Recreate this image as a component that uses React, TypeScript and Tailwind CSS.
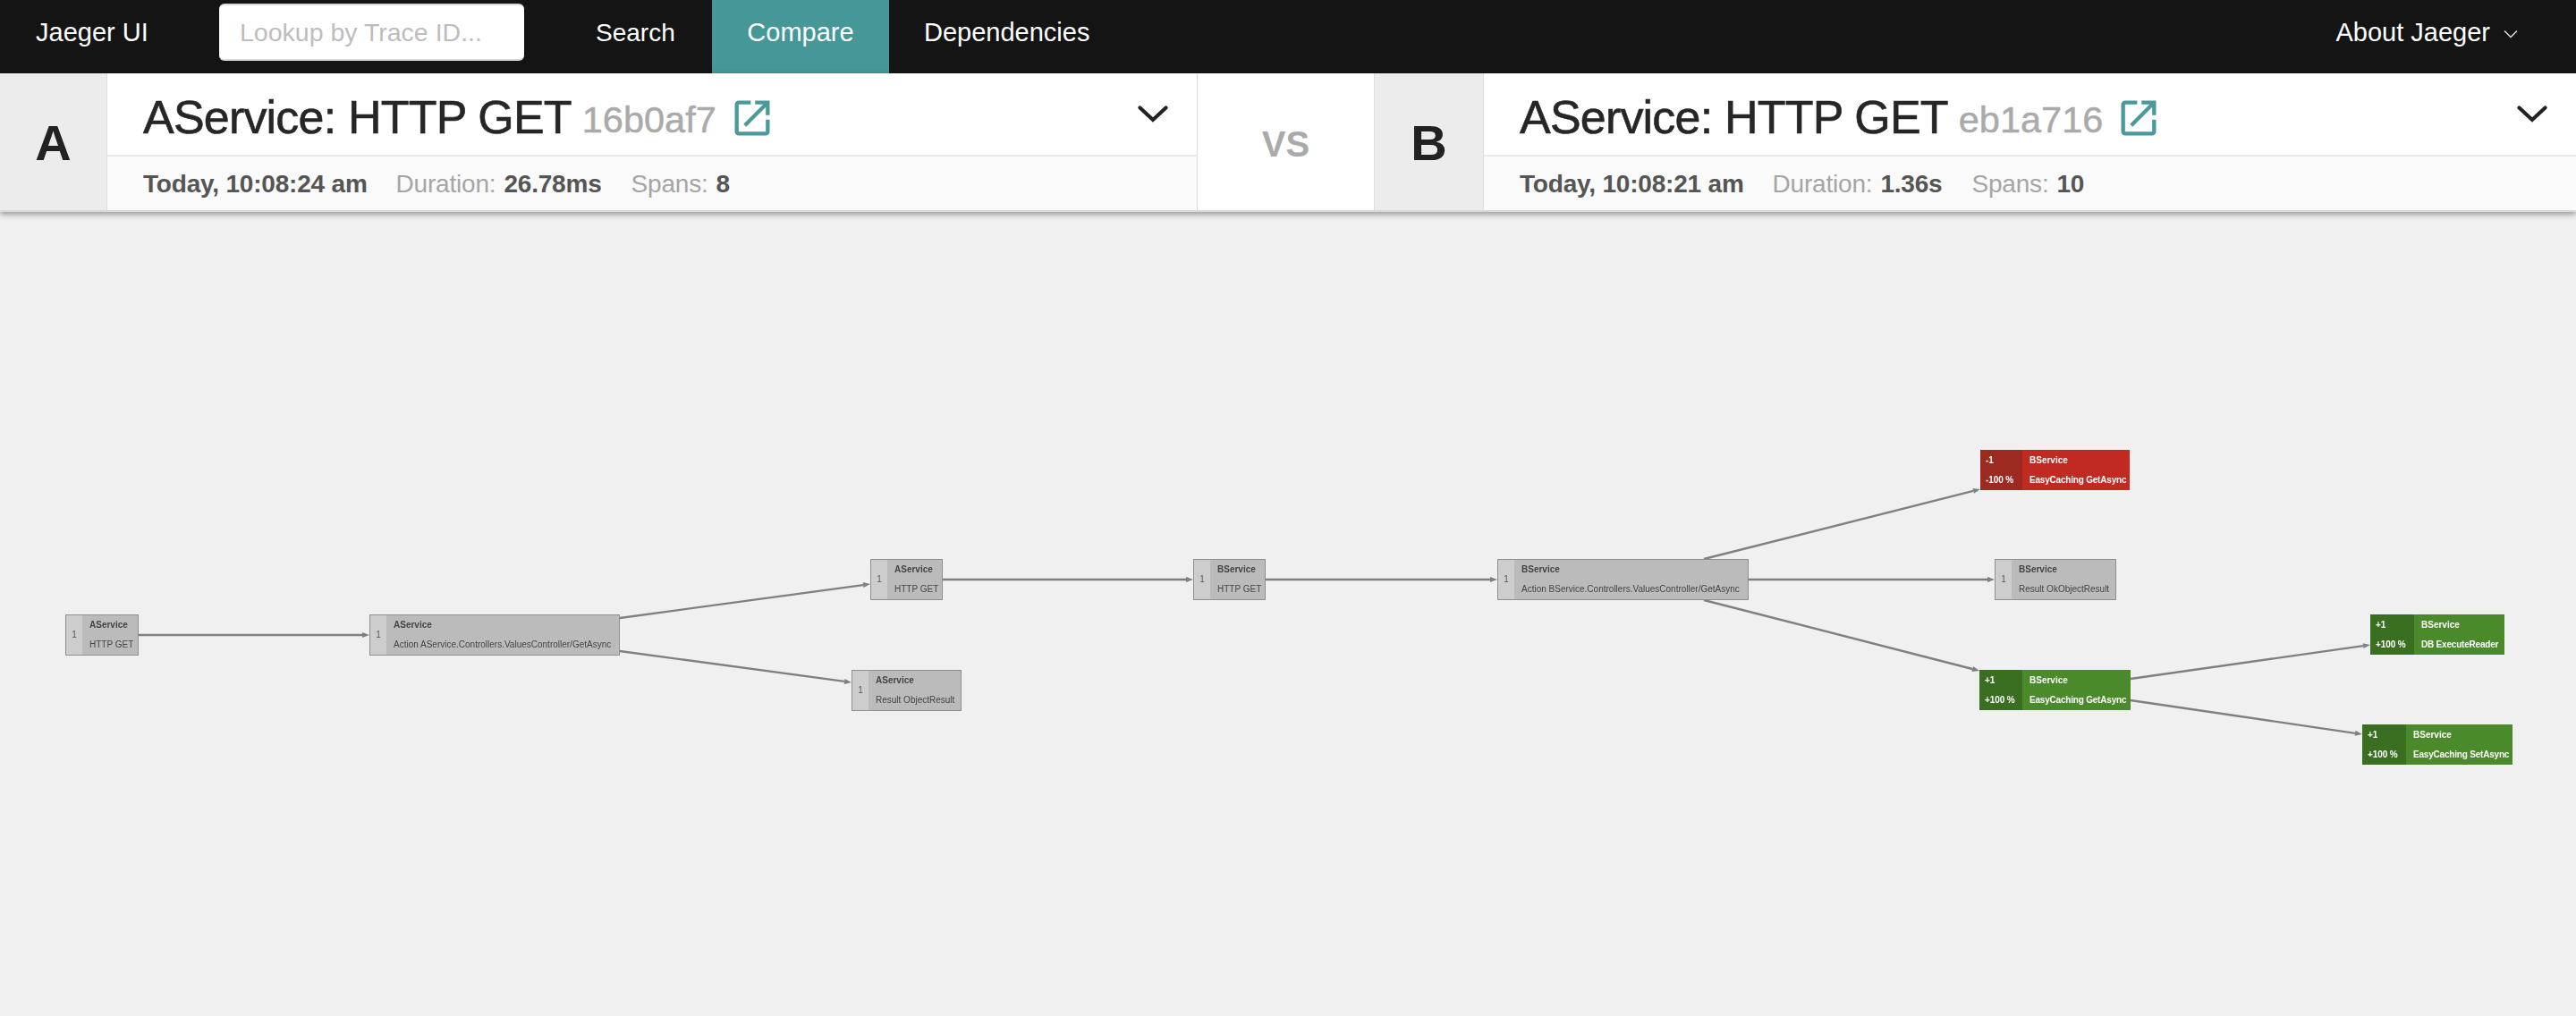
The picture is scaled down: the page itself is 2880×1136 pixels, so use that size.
import React from "react";
import { IoMdOpen } from "react-icons/io";

const SANS = "font-['Liberation_Sans',Arial,sans-serif]";

type NodeProps = {
  x: number; y: number; w: number; h: number; service: string; op: string;
  count: string; pct?: string; kind?: "same" | "less" | "more"; side: number;
};

function GraphNode({ x, y, w, h, service, op, count, pct, kind = "same", side }: NodeProps) {
  const outer =
    kind === "same"
      ? "bg-[#bbbbbb] border border-[#8f8f8f] text-[#444]"
      : kind === "less"
      ? "bg-[#c12a22] text-white"
      : "bg-[#4a8a2a] text-white";
  const left =
    kind === "same" ? "bg-[#cdcdcd] text-[#555]" : kind === "less" ? "bg-[#9c2a20] text-white" : "bg-[#3a6f22] text-white";
  return (
    <div
      className={`absolute flex box-border text-[10px] leading-[22px] whitespace-nowrap ${outer}`}
      style={{ left: x, top: y, width: w, height: h }}
    >
      <div className={`flex flex-col justify-center shrink-0 ${left} ${pct ? "pl-[6px]" : "items-center"}`} style={{ width: side }}>
        {pct ? (
          <>
            <span className="font-bold">{count}</span>
            <span className="font-bold tracking-[-0.1px]">{pct}</span>
          </>
        ) : (
          <span>{count}</span>
        )}
      </div>
      <div className="flex flex-col justify-center pl-[8px]">
        <span className="font-bold">{service}</span>
        <span className={kind === "same" ? "" : "font-bold tracking-[-0.2px]"}>{op}</span>
      </div>
    </div>
  );
}

function TraceCard({ id, time, duration, spans, letter, wide, col }: { id: string; time: string; duration: string; spans: string; letter: string; wide: string; col: string }) {
  return (
    <div className={`flex ${wide}`}>
      <div className={`${col} shrink-0 bg-[#ececec] border-r border-[#dcdcdc] flex items-center justify-center pt-[2px] text-[56px] font-bold text-[#222] leading-none`}>
        {letter}
      </div>
      <div className="flex-1 flex flex-col min-w-0">
        <div className="h-[93px] bg-white border-b-2 border-[#e8e8e8] flex items-center pl-[40px] pr-[32px]">
          <span className="text-[52px] leading-none text-[#262626] tracking-[-0.8px] mt-[6px] [-webkit-text-stroke:0.6px_#262626]">AService: HTTP GET</span>
          <span className="text-[41.5px] leading-none text-[#aaaaaa] ml-[12px] mt-[12px] [-webkit-text-stroke:0.5px_#aaaaaa]">{id}</span>
          <IoMdOpen className="ml-[14px] mt-[8px] text-[#4a9a9c]" size={52} />
          <svg className="ml-auto" width="34" height="19" viewBox="0 0 34 19" fill="none">
            <path d="M2.5 2.5 L17 16 L31.5 2.5" stroke="#222" strokeWidth="4.2" strokeLinecap="round" />
          </svg>
        </div>
        <div className="flex-1 bg-[#fafafa] flex items-center pl-[40px] pt-[2px] text-[28px] tracking-[-0.2px] text-[#a5a5a5]">
          <span className="font-bold text-[#555]">{time}</span>
          <span className="ml-[32px]">Duration: </span>
          <span className="font-bold text-[#555] ml-[9px]">{duration}</span>
          <span className="ml-[33px]">Spans: </span>
          <span className="font-bold text-[#555] ml-[9px]">{spans}</span>
        </div>
      </div>
    </div>
  );
}

const edges: [number, number, number, number][] = [
  [155, 710, 413, 710],
  [693, 691, 973, 653],
  [693, 728, 952, 763],
  [1054, 648, 1334, 648],
  [1415, 648, 1674, 648],
  [1955, 648, 2230, 648],
  [1905, 625, 2214, 547],
  [1905, 671, 2213, 750],
  [2382, 759, 2650, 721],
  [2382, 783, 2641, 821],
];

const nodes: NodeProps[] = [
  { x: 73, y: 687, w: 82, h: 46, service: "AService", op: "HTTP GET", count: "1", side: 18 },
  { x: 413, y: 687, w: 280, h: 46, service: "AService", op: "Action AService.Controllers.ValuesController/GetAsync", count: "1", side: 18 },
  { x: 973, y: 625, w: 81, h: 46, service: "AService", op: "HTTP GET", count: "1", side: 18 },
  { x: 952, y: 749, w: 123, h: 46, service: "AService", op: "Result ObjectResult", count: "1", side: 18 },
  { x: 1334, y: 625, w: 81, h: 46, service: "BService", op: "HTTP GET", count: "1", side: 18 },
  { x: 1674, y: 625, w: 281, h: 46, service: "BService", op: "Action BService.Controllers.ValuesController/GetAsync", count: "1", side: 18 },
  { x: 2230, y: 625, w: 136, h: 46, service: "BService", op: "Result OkObjectResult", count: "1", side: 18 },
  { x: 2214, y: 503, w: 167, h: 45, service: "BService", op: "EasyCaching GetAsync", count: "-1", pct: "-100 %", kind: "less", side: 47 },
  { x: 2213, y: 749, w: 169, h: 45, service: "BService", op: "EasyCaching GetAsync", count: "+1", pct: "+100 %", kind: "more", side: 48 },
  { x: 2650, y: 687, w: 150, h: 45, service: "BService", op: "DB ExecuteReader", count: "+1", pct: "+100 %", kind: "more", side: 49 },
  { x: 2641, y: 810, w: 168, h: 45, service: "BService", op: "EasyCaching SetAsync", count: "+1", pct: "+100 %", kind: "more", side: 49 },
];

export default function App() {
  return (
    <div className={`h-screen flex flex-col bg-[#f0f0f0] overflow-hidden ${SANS}`}>
      <nav className="h-[82px] shrink-0 bg-[#141414] flex items-stretch text-white text-[29px]">
        <span className="flex items-center pl-[40px] w-[245px] pb-[9px]">Jaeger UI</span>
        <div className="flex items-start pt-[4px] w-[341px]">
          <input
            readOnly
            placeholder="Lookup by Trace ID..."
            className="w-full h-[64px] bg-white rounded-[6px] border-y-2 border-y-[#d9d9d9] pl-[23px] text-[28.5px] placeholder:text-[#bdbdbd] outline-none"
          />
        </div>
        <span className="flex items-center pl-[80px] pr-[40px] w-[210px] pb-[9px] text-[28px]">Search</span>
        <span className="flex items-center justify-center w-[198px] bg-[#459798] pb-[9px]">Compare</span>
        <span className="flex items-center pl-[39px] pb-[9px]">Dependencies</span>
        <span className="ml-auto flex items-center pr-[65px] pb-[9px]">
          About Jaeger
          <svg className="ml-[15px] mt-[3px]" width="16" height="10" viewBox="0 0 16 10" fill="none">
            <path d="M1 1.5 L8 8.5 L15 1.5" stroke="#ddd" strokeWidth="1.5" />
          </svg>
        </span>
      </nav>
      <header className="h-[155px] shrink-0 flex bg-white shadow-[0_3px_6px_rgba(0,0,0,0.35)] border-b-2 border-[#d8d8d8] z-10">
        <TraceCard letter="A" col="w-[120px]" id="16b0af7" time="Today, 10:08:24 am" duration="26.78ms" spans="8" wide="w-[1338px]" />
        <div className="w-[199px] shrink-0 border-x border-[#dcdcdc] flex items-center justify-center pt-[4px] text-[40px] font-bold text-[#aaaaaa]">
          VS
        </div>
        <TraceCard letter="B" col="w-[122px]" id="eb1a716" time="Today, 10:08:21 am" duration="1.36s" spans="10" wide="flex-1" />
      </header>
      <main className="relative flex-1">
        <div className="absolute left-0 top-[-237px] w-[2880px] h-[1136px] blur-[0.4px]">
          <svg className="absolute left-0 top-0" width="2880" height="1136" fill="none">
            {edges.map(([x1, y1, x2, y2], i) => {
              const a = Math.atan2(y2 - y1, x2 - x1);
              const l = 8;
              const w = 3;
              const bx = x2 - l * Math.cos(a);
              const by = y2 - l * Math.sin(a);
              const px = -Math.sin(a) * w;
              const py = Math.cos(a) * w;
              return (
                <g key={i}>
                  <line x1={x1} y1={y1} x2={bx} y2={by} stroke="#808080" strokeWidth="2.4" />
                  <polygon points={`${x2},${y2} ${bx + px},${by + py} ${bx - px},${by - py}`} fill="#808080" />
                </g>
              );
            })}
          </svg>
          {nodes.map((n) => (
            <GraphNode key={n.x} {...n} />
          ))}
        </div>
      </main>
    </div>
  );
}
